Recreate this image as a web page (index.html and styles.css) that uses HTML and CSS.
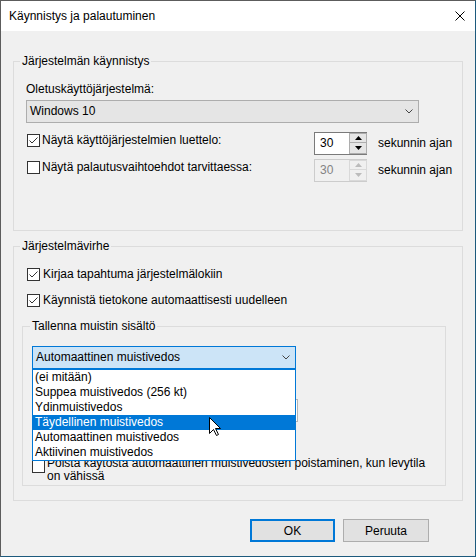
FILE: index.html
```html
<!DOCTYPE html>
<html lang="fi">
<head>
<meta charset="utf-8">
<title>Käynnistys ja palautuminen</title>
<link rel="stylesheet" href="styles.css">
</head>
<body>
<div class="window">
  <div class="titlebar">
    <span class="title">Käynnistys ja palautuminen</span>
    <svg class="close" width="10" height="10" viewBox="0 0 10 10"><path d="M0.5 0.5 L9.5 9.5 M9.5 0.5 L0.5 9.5" stroke="#000" stroke-width="1" fill="none"/></svg>
  </div>
  <div class="content">
    <section class="group g1">
      <div class="group-title">Järjestelmän käynnistys</div>
      <div class="g1-body">
        <div class="line">Oletuskäyttöjärjestelmä:</div>
        <div class="combo os">
          <span>Windows 10</span>
          <svg class="chev" width="8" height="5" viewBox="0 0 8 5"><path d="M0.5 0.5 L4 4 L7.5 0.5" stroke="#444" fill="none"/></svg>
        </div>
        <div class="spin-row">
          <label class="check-label">
            <span class="cb"><svg width="11" height="11" viewBox="0 0 11 11"><path d="M1.5 5.5 L4 8 L9.5 2.5" stroke="#333" fill="none"/></svg></span>
            <span>Näytä käyttöjärjestelmien luettelo:</span>
          </label>
          <div class="spin">
            <span class="spin-val">30</span>
            <div class="spin-btns">
              <span class="spin-btn up"><svg width="7" height="4" viewBox="0 0 7 4"><path d="M0 4 L3.5 0 L7 4 Z" fill="#000"/></svg></span>
              <span class="spin-btn down"><svg width="7" height="4" viewBox="0 0 7 4"><path d="M0 0 L3.5 4 L7 0 Z" fill="#000"/></svg></span>
            </div>
          </div>
          <span class="secs">sekunnin ajan</span>
        </div>
        <div class="spin-row second">
          <label class="check-label">
            <span class="cb"></span>
            <span>Näytä palautusvaihtoehdot tarvittaessa:</span>
          </label>
          <div class="spin disabled">
            <span class="spin-val">30</span>
            <div class="spin-btns">
              <span class="spin-btn up"><svg width="7" height="4" viewBox="0 0 7 4"><path d="M0 4 L3.5 0 L7 4 Z" fill="#bcbcbc"/></svg></span>
              <span class="spin-btn down"><svg width="7" height="4" viewBox="0 0 7 4"><path d="M0 0 L3.5 4 L7 0 Z" fill="#bcbcbc"/></svg></span>
            </div>
          </div>
          <span class="secs">sekunnin ajan</span>
        </div>
      </div>
    </section>

    <section class="group g2">
      <div class="group-title">Järjestelmävirhe</div>
      <div class="g2-body">
        <label class="check-row">
          <span class="cb"><svg width="11" height="11" viewBox="0 0 11 11"><path d="M1.5 5.5 L4 8 L9.5 2.5" stroke="#333" fill="none"/></svg></span>
          <span>Kirjaa tapahtuma järjestelmälokiin</span>
        </label>
        <label class="check-row second">
          <span class="cb"><svg width="11" height="11" viewBox="0 0 11 11"><path d="M1.5 5.5 L4 8 L9.5 2.5" stroke="#333" fill="none"/></svg></span>
          <span>Käynnistä tietokone automaattisesti uudelleen</span>
        </label>

        <section class="group inner">
          <div class="group-title">Tallenna muistin sisältö</div>
          <div class="inner-body">
            <div class="dropwrap">
              <div class="combo focus">
                <span>Automaattinen muistivedos</span>
                <svg class="chev" width="8" height="5" viewBox="0 0 8 5"><path d="M0.5 0.5 L4 4 L7.5 0.5" stroke="#444" fill="none"/></svg>
              </div>
              <ul class="droplist">
                <li>(ei mitään)</li>
                <li>Suppea muistivedos (256 kt)</li>
                <li>Ydinmuistivedos</li>
                <li class="selected">Täydellinen muistivedos</li>
                <li>Automaattinen muistivedos</li>
                <li>Aktiivinen muistivedos</li>
              </ul>
            </div>
            <div class="textbox"></div>
            <label class="check-multi">
              <span class="cb"></span>
              <span>Poista käytöstä automaattinen muistivedosten poistaminen, kun levytila<br>on vähissä</span>
            </label>
          </div>
        </section>
      </div>
    </section>

    <div class="buttons">
      <button class="btn default">OK</button>
      <button class="btn cancel">Peruuta</button>
    </div>
  </div>

  <svg class="cursor" width="13" height="20" viewBox="0 0 13 20">
    <path d="M0.5 0.5 L0.5 16.5 L4.5 12.5 L7.5 18.5 L9.5 17.5 L6.5 11.5 L11.5 11.5 Z" fill="#fff" stroke="#000" stroke-width="1" stroke-linejoin="miter"/>
  </svg>
</div>
</body>
</html>
```

FILE: styles.css
```css
* {
  box-sizing: border-box;
}

html, body {
  margin: 0;
  padding: 0;
}

body {
  font-family: "Liberation Sans", Arial, sans-serif;
  font-size: 12px;
  line-height: 15px;
  color: #000;
  background: #f0f0f0;
}

.window {
  position: relative;
  width: 476px;
  height: 557px;
  border: 1px solid;
  border-color: #5c5c5c #1c5a7d #1c5a7d #5c5c5c;
  background: #f0f0f0;
  display: flex;
  flex-direction: column;
}

.titlebar {
  height: 30px;
  flex: none;
  background: #fff;
  display: flex;
  align-items: center;
  justify-content: space-between;
  padding: 0 10px 0 8px;
}

.title {
  line-height: 15px;
}

.close {
  display: block;
  margin-top: -1px;
}

.content {
  padding: 30px 12px 0 12px;
}

/* group boxes: a bordered box whose title sits on the top border */
.group {
  border: 1px solid #dcdcdc;
}

.group-title {
  width: fit-content;
  height: 15px;
  margin: -8px 0 0 6px;
  padding: 0 2px;
  background: #f0f0f0;
  line-height: 15px;
}

.inner > .group-title {
  margin-left: 7px;
}

/* group 1 */
.g1-body {
  padding: 13px 0 48px 12px;
}

.line {
  height: 15px;
}

.combo {
  height: 23px;
  border: 1px solid #adadad;
  background: #e5e5e5;
  display: flex;
  align-items: center;
  justify-content: space-between;
  padding: 0 5px 0 3px;
}

.combo.os {
  margin-top: 3px;
  width: 393px;
}

.chev {
  display: block;
}

.spin-row {
  display: flex;
  align-items: center;
  height: 23px;
  margin-top: 9px;
}

.spin-row.second {
  margin-top: 4px;
}

.check-label {
  width: 288px;
  height: 15px;
  align-self: flex-start;
  margin-top: 1px;
  display: flex;
  align-items: center;
  gap: 2px;
  padding-left: 1px;
}

.cb {
  width: 13px;
  height: 13px;
  flex: none;
  border: 1px solid #333;
  background: #fff;
  display: flex;
  align-items: center;
  justify-content: center;
}

.cb svg {
  display: block;
}

.spin {
  width: 53px;
  height: 23px;
  display: flex;
  border: 1px solid #7a7a7a;
  border-right: 0;
  background: #fff;
}

.spin-val {
  flex: 1;
  padding-left: 5px;
  line-height: 20px;
}

.spin-btns {
  width: 18px;
  display: flex;
  flex-direction: column;
}

.spin-btn {
  height: 10px;
  border: 1px solid #adadad;
  background: #e5e5e5;
  display: flex;
  align-items: center;
  justify-content: center;
}

.spin-btn.down {
  height: 11px;
  border-top: 0;
}

.spin-btn svg {
  display: block;
}

.spin.disabled {
  border-color: #cccccc;
  background: #f0f0f0;
  color: #838383;
}

.spin.disabled .spin-btn {
  border-color: #d9d9d9;
  background: #f0f0f0;
}

.secs {
  margin-left: 11px;
}

/* group 2 */
.g2 {
  margin-top: 15px;
}

.g2-body {
  padding: 13px 16px 14px 8px;
}

.check-row {
  display: flex;
  align-items: center;
  height: 15px;
  gap: 3px;
  margin-left: 5px;
}

.check-row.second {
  margin-top: 11px;
}

.inner {
  margin-top: 18px;
}

.inner-body {
  padding: 12px 0 2px 9px;
}

.dropwrap {
  position: relative;
  width: 264px;
}

.combo.focus {
  width: 264px;
  background: #cce4f7;
  border-color: #0078d7;
}

.droplist {
  position: absolute;
  top: 100%;
  left: 0;
  z-index: 2;
  width: 264px;
  height: 92px;
  margin: 0;
  padding: 0;
  list-style: none;
  border: 1px solid #0078d7;
  background: #fff;
}

.droplist li {
  height: 15px;
  line-height: 15px;
  padding-left: 2px;
}

.droplist li.selected {
  background: #0078d7;
  color: #fff;
}

.textbox {
  margin-top: 30px;
  width: 266px;
  height: 23px;
  border: 1px solid #b4b4b4;
  background: #fff;
}

.check-multi {
  margin-top: 35px;
  display: flex;
  align-items: flex-start;
  gap: 2px;
  line-height: 13px;
}

.check-multi .cb {
  margin-top: 3px;
}

/* buttons */
.buttons {
  display: flex;
  justify-content: flex-end;
  gap: 8px;
  margin-top: 18px;
  padding-right: 34px;
}

.btn {
  height: 23px;
  margin: 0;
  padding: 0;
  font-family: "Liberation Sans", Arial, sans-serif;
  font-size: 12px;
  color: #000;
  background: #e1e1e1;
  border: 1px solid #adadad;
}

.btn.default {
  width: 85px;
  border: 2px solid #0078d7;
}

.btn.cancel {
  width: 86px;
}

.cursor {
  position: absolute;
  left: 208px;
  top: 416px;
  z-index: 3;
  display: block;
}
```
